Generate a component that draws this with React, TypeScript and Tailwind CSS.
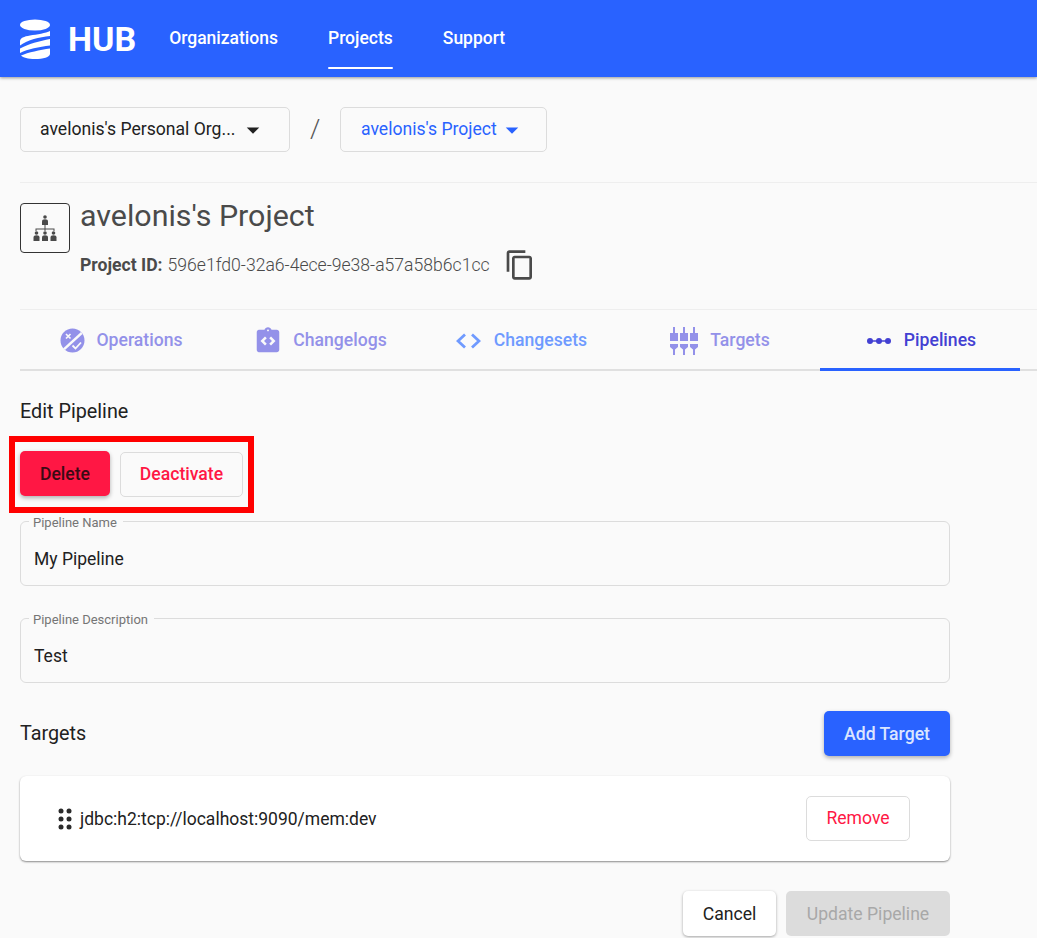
import React from "react";
import { MdContentCopy, MdIntegrationInstructions, MdArrowDropDown } from "react-icons/md";

const Logo = () => (
  <svg width="30" height="40" viewBox="0 0 30 40" fill="#fff">
    <ellipse cx="15" cy="6" rx="15" ry="5.500" />
    <path d="M30 12v5C19 18 8 21 0 26.500v-4C0 19 4 17.500 10 16.500 17 15.500 26 14 30 12z" />
    <path d="M30 20v6.500C19 28 8 30 0 34v-4.500C8 25 20 22 30 20z" />
    <path d="M30 29.500V35c0 3-7 5-15 5-7 0-12-1.500-14-3.500C8 33.500 20 31 30 29.500z" />
  </svg>
);

const Person = ({ x, y }: { x: number; y: number }) => (
  <g transform={`translate(${x} ${y})`}>
    <circle cx="3" cy="2" r="1.800" />
    <path d="M0 10V6.500C0 5 1 4.300 3 4.300S6 5 6 6.500V10z" />
  </g>
);

const OrgIcon = () => (
  <svg width="24" height="26" viewBox="0 0 24 26" fill="#4a4a4a">
    <Person x={9} y={0} />
    <path d="M11.500 10h1v3.500H21.500V16h-1v-1.500h-8V16h-1v-1.500h-8V16h-1v-2.500h9z" />
    <Person x={0.500} y={16} />
    <Person x={9} y={16} />
    <Person x={17.500} y={16} />
  </svg>
);

const OperationsIcon = () => (
  <svg width="25" height="25" viewBox="0 0 25 25">
    <circle cx="12.500" cy="12.500" r="12" fill="#9391e9" />
    <path d="M21 4l1.500 2L5 22l-2-1.500z" fill="#fafafa" />
    <path d="M6 6l4.500 4.500M10.500 6L6 10.500" stroke="#fafafa" strokeWidth="1.700" />
    <path d="M12.500 17.500l3 3 5.500-6" stroke="#fafafa" strokeWidth="1.800" fill="none" />
  </svg>
);

const CodeIcon = () => (
  <svg width="25" height="16" viewBox="0 0 25 16" fill="none" stroke="#6f9aff" strokeWidth="2.800">
    <path d="M9 1.500L2 8l7 6.500" />
    <path d="M16 1.500L23 8l-7 6.500" />
  </svg>
);

const TargetsIcon = () => (
  <svg width="28" height="28" viewBox="0 0 28 28" fill="#9391e9">
    {[0, 10, 20].map((x) => (
      <g key={x} transform={`translate(${x} 0)`}>
        <path d="M3 0h2v6h3v8H0V6h3z" />
        <path d="M0 17h8v3l-3 2.500V28H3v-5.500L0 20z" />
      </g>
    ))}
  </svg>
);

const PipelineIcon = () => (
  <svg width="26" height="8" viewBox="0 0 26 8" fill="#4340d2">
    <circle cx="4" cy="4" r="3" />
    <circle cx="13" cy="4" r="3" />
    <circle cx="22" cy="4" r="3" />
    <rect x="4" y="3.250" width="18" height="1.500" />
  </svg>
);

const DragIcon = () => (
  <svg width="14" height="22" viewBox="0 0 14 22" fill="#2b2b2b">
    {[3, 11, 19].map((y) => (
      <React.Fragment key={y}>
        <circle cx="3" cy={y} r="2.500" />
        <circle cx="11" cy={y} r="2.500" />
      </React.Fragment>
    ))}
  </svg>
);

const tabs = [
  { label: "Operations", icon: <OperationsIcon />, cls: "text-[#9391e9] pl-[2px]", gap: "gap-3" },
  { label: "Changelogs", icon: <MdIntegrationInstructions size={30} color="#9391e9" />, cls: "text-[#9391e9]", gap: "gap-[10px]" },
  { label: "Changesets", icon: <CodeIcon />, cls: "text-[#6f9aff] pl-[3px]", gap: "gap-[13px]" },
  { label: "Targets", icon: <TargetsIcon />, cls: "text-[#9391e9]", gap: "gap-3" },
  { label: "Pipelines", icon: <PipelineIcon />, cls: "text-[#4340d2] pl-[2px]", gap: "gap-3", active: true },
];

const Field = ({ label, value, className }: { label: string; value: string; className?: string }) => (
  <fieldset className={`w-[930px] h-[74px] border border-[#dcdcdc] rounded-[6px] pl-2 ${className ?? ""}`}>
    <legend className="pl-1 pr-[6px] pt-[4px] text-[13px] leading-[14px] text-[#757575]">{label}</legend>
    <div className="pl-[5px] pt-[19px] text-[17.5px] leading-[20px] text-[#212121]">{value}</div>
  </fieldset>
);

export default function App() {
  return (
    <div className="relative w-[1037px] h-[938px] overflow-hidden bg-[#fafafa] font-['Roboto',sans-serif]">
      <header className="h-[77px] bg-[#2962ff] shadow-[0_1px_3px_rgba(0,0,0,0.4)] flex items-center pl-5 text-white">
        <Logo />
        <span className="ml-[18px] text-[34px] font-bold leading-none">HUB</span>
        <nav className="ml-[33px] flex gap-[50px] text-[17.5px] font-medium h-full">
          <a className="flex items-center">Organizations</a>
          <a className="relative flex items-center">
            Projects
            <span className="absolute left-0 right-0 top-[67px] h-[2px] rounded-sm bg-white" />
          </a>
          <a className="flex items-center">Support</a>
        </nav>
      </header>

      <div className="pl-5 pt-[30px]">
        <div className="flex items-center">
          <button className="w-[270px] h-[45px] border border-[#dcdcdc] rounded-[5px] flex items-center pl-[19px] text-[17.6px] text-[#212121]">
            avelonis's Personal Org...
            <MdArrowDropDown size={30} className="ml-[3px]" />
          </button>
          <span className="ml-5 mr-[22px] w-2 text-[26px] font-light text-[#555] text-center">/</span>
          <button className="w-[207px] h-[45px] border border-[#dcdcdc] rounded-[5px] flex items-center pl-5 text-[17.6px] text-[#2962ff]">
            avelonis's Project
            <MdArrowDropDown size={30} />
          </button>
        </div>

        <div className="mt-[30px] border-t border-[#eeeeee] pt-5 h-[127px] flex items-start gap-[10px]">
          <div className="w-[50px] h-[50px] border border-[#333] rounded-[4px] flex items-center justify-center">
            <OrgIcon />
          </div>
          <div>
            <h1 className="-mt-px text-[30.4px] leading-[27px] text-[#4a4a4a]">avelonis's Project</h1>
            <div className="mt-5 flex items-center text-[17.6px] text-[#4a4a4a]">
              <span className="font-bold mr-[5px]">Project ID:</span>
              <span className="font-light">596e1fd0-32a6-4ece-9e38-a57a58b6c1cc</span>
              <MdContentCopy size={32} className="ml-[14px]" />
            </div>
          </div>
        </div>

        <div className="border-t border-[#eeeeee] border-b-2 border-b-[#e0e0e0] h-[62px] flex">
          {tabs.map((t) => (
            <div
              key={t.label}
              className={`relative w-[200px] pt-[2px] flex items-center justify-center ${t.gap} text-[17.6px] font-medium ${t.cls}`}
            >
              {t.icon}
              <span>{t.label}</span>
              {t.active && <span className="absolute left-0 right-0 -bottom-[2px] h-[3px] bg-[#2962ff]" />}
            </div>
          ))}
        </div>

        <h2 className="mt-[28px] text-[19.8px] leading-[26px] text-[#212121]">Edit Pipeline</h2>

        <div className="mt-[26px] flex items-start gap-[10px]">
          <button className="relative z-10 w-[90px] h-[45px] pt-px rounded-[5px] bg-[#ff1744] shadow-[0_2px_4px_rgba(0,0,0,0.3)] text-[17.6px] font-medium text-[#3b0a14]">
            Delete
          </button>
          <button className="relative z-10 mt-px w-[123px] h-[45px] rounded-[5px] border border-[#dcdcdc] text-[17.6px] font-medium text-[#ff1744]">
            Deactivate
          </button>
        </div>

        <div className="mt-[15px]">
          <Field label="Pipeline Name" value="My Pipeline" />
          <Field label="Pipeline Description" value="Test" className="mt-[23px]" />
        </div>

        <div className="w-[930px] mt-[28px] flex items-center justify-between">
          <span className="text-[19.8px] text-[#212121]">Targets</span>
          <button className="w-[126px] h-[45px] pt-px rounded-[5px] bg-[#2962ff] shadow-[0_2px_4px_rgba(0,0,0,0.3)] text-[17.6px] font-medium text-[#dbe5ff]">
            Add Target
          </button>
        </div>

        <div className="w-[930px] h-[85px] mt-5 bg-white rounded-[6px] shadow-[0_1px_2px_rgba(0,0,0,0.45)] flex items-center pl-[38px] pr-10">
          <DragIcon />
          <span className="ml-2 pt-px text-[17.5px] text-[#212121]">jdbc:h2:tcp://localhost:9090/mem:dev</span>
          <button className="ml-auto w-[104px] h-[45px] rounded-[5px] border border-[#dcdcdc] text-[17.6px] text-[#ff1744]">
            Remove
          </button>
        </div>

        <div className="w-[930px] mt-[30px] flex justify-end gap-[10px]">
          <button className="w-[93px] h-[45px] pt-px rounded-[5px] bg-white shadow-[0_1px_3px_rgba(0,0,0,0.35)] text-[17.6px] text-[#212121]">
            Cancel
          </button>
          <button className="w-[164px] h-[45px] pt-px rounded-[5px] bg-[#dcdcdc] text-[17.6px] text-[#a8a8a8]">
            Update Pipeline
          </button>
        </div>
      </div>

      {/* red annotation box drawn over the screenshot */}
      <div className="absolute left-[9px] top-[436px] w-[245px] h-[77px] border-[6px] border-[#ff0000]" />
    </div>
  );
}
